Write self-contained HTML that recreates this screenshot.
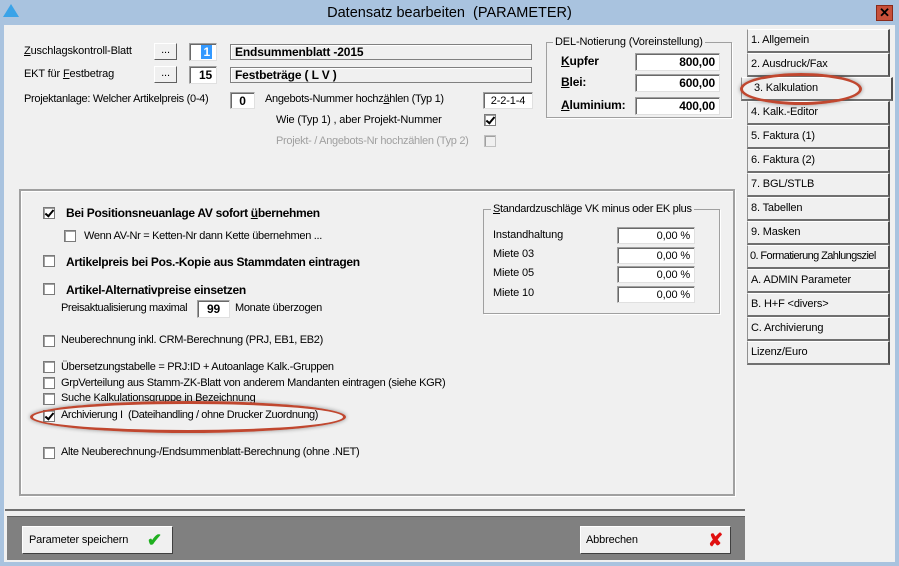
<!DOCTYPE html>
<html><head><meta charset="utf-8"><style>
*{box-sizing:border-box;margin:0;padding:0}
body{width:899px;height:566px;overflow:hidden;background:#a9c3df;font-family:"Liberation Sans",sans-serif;font-size:11px;color:#000;position:relative;letter-spacing:-0.15px}
.a{position:absolute;white-space:nowrap}
.win{position:absolute;left:4px;top:25px;width:891px;height:537px;background:#f0f0f0}
.inp{position:absolute;background:#fff;border:1px solid #a0a0a0;border-right-color:#e0e0e0;border-bottom-color:#e0e0e0;box-shadow:inset 1px 1px 0 #696969;text-align:right;padding-right:4px;font-weight:bold;font-size:12px;line-height:16px}
.ro{position:absolute;background:#f0f0f0;border:1px solid #808080;box-shadow:inset 1px 1px 0 #fff;font-weight:bold;font-size:12px;line-height:14px;padding-left:4px}
.btn{position:absolute;background:#f0f0f0;border:1px solid #fff;border-right-color:#606060;border-bottom-color:#606060;text-align:center}
.cb{position:absolute;width:12px;height:12px;background:#fff;border:1px solid #7a7a7a;box-shadow:inset 1px 1px 0 #a0a0a0}
.cb.c::after{content:"";position:absolute;left:3px;top:0px;width:3px;height:7px;border:solid #000;border-width:0 2px 2px 0;transform:rotate(40deg)}
.cb.d{background:#f0f0f0;border-color:#c0c0c0}
.tab{position:absolute;left:747px;width:143px;height:24px;background:#f0f0f0;border:1px solid #fff;border-right:2px solid #505050;border-bottom:2px solid #707070;border-left:1px solid #909090;padding-left:3px;line-height:20px;font-size:11px;overflow:hidden;white-space:nowrap}
.grp{position:absolute;border:1px solid #a0a0a0;box-shadow:1px 1px 0 #fff}
.b{font-weight:bold;font-size:12px}
u{text-decoration:underline}
.oval{position:absolute;border:3px solid #c0472f;border-radius:50%;box-shadow:0 0 4px rgba(0,0,0,.4)}
</style></head><body>
<div class="a" style="left:3px;top:4px;width:0;height:0;border-left:8px solid transparent;border-right:8px solid transparent;border-bottom:13px solid #3aa3e8"></div>
<div class="a" style="left:0;top:5px;width:899px;text-align:center;font-size:14.5px;color:#000;letter-spacing:0">Datensatz bearbeiten&nbsp; (PARAMETER)</div>
<div class="a" style="left:876px;top:5px;width:17px;height:16px;background:#c7503a;border:1px solid #8a2a1a;color:#000;font-weight:bold;font-size:13px;line-height:13px;text-align:center">✕</div>
<div class="win"></div>

<div class="a" style="left:24px;top:45px"><u>Z</u>uschlagskontroll-Blatt</div>
<div class="btn" style="left:154px;top:43px;width:23px;height:17px;line-height:12px">...</div>
<div class="inp" style="left:189px;top:43px;width:28px;height:18px"><span style="background:#3399ff;color:#fff;padding:0 2px">1</span></div>
<div class="ro" style="left:230px;top:44px;width:302px;height:16px">Endsummenblatt -2015</div>
<div class="a" style="left:24px;top:68px">EKT für <u>F</u>estbetrag</div>
<div class="btn" style="left:154px;top:66px;width:23px;height:17px;line-height:12px">...</div>
<div class="inp" style="left:189px;top:66px;width:28px;height:18px">15</div>
<div class="ro" style="left:230px;top:67px;width:302px;height:16px">Festbeträge ( L V )</div>
<div class="a" style="left:24px;top:93px;letter-spacing:-0.3px">Projektanlage: Welcher Artikelpreis (0-4)</div>
<div class="inp" style="left:230px;top:92px;width:25px;height:17px;text-align:center;padding:0">0</div>
<div class="a" style="left:265px;top:93px;letter-spacing:-0.3px">Angebots-Nummer hochz<u>ä</u>hlen (Typ 1)</div>
<div class="inp" style="left:483px;top:92px;width:50px;height:17px;font-weight:normal;font-size:11px;text-align:center;padding:0">2-2-1-4</div>
<div class="a" style="left:276px;top:114px">Wie (Typ 1) , aber Projekt-Nummer</div>
<div class="cb c" style="left:484px;top:114px"></div>
<div class="a" style="left:276px;top:135px;color:#a0a0a0;letter-spacing:-0.3px">Projekt- / Angebots-Nr hochzählen (Typ 2)</div>
<div class="cb d" style="left:484px;top:135px"></div>

<div class="grp" style="left:546px;top:42px;width:186px;height:76px"></div>
<div class="a" style="left:553px;top:36px;background:#f0f0f0;padding:0 2px">DEL-Notierung (Voreinstellung)</div>
<div class="a b" style="left:561px;top:54px"><u>K</u>upfer</div>
<div class="inp" style="left:635px;top:53px;width:85px;height:18px">800,00</div>
<div class="a b" style="left:561px;top:75px"><u>B</u>lei:</div>
<div class="inp" style="left:635px;top:74px;width:85px;height:18px">600,00</div>
<div class="a b" style="left:561px;top:98px"><u>A</u>luminium:</div>
<div class="inp" style="left:635px;top:97px;width:85px;height:18px">400,00</div>

<div class="grp" style="left:19px;top:189px;width:716px;height:307px;border:2px solid #a0a0a0;box-shadow:inset 1px 1px 0 #fff,1px 1px 0 #fff"></div>
<div class="cb c" style="left:43px;top:207px"></div>
<div class="a b" style="left:66px;top:206px;letter-spacing:-0.3px">Bei Positionsneuanlage AV sofort <u>ü</u>bernehmen</div>
<div class="cb" style="left:64px;top:230px"></div>
<div class="a" style="left:84px;top:230px;letter-spacing:-0.3px">Wenn AV-Nr = Ketten-Nr dann Kette übernehmen ...</div>
<div class="cb" style="left:43px;top:255px"></div>
<div class="a b" style="left:66px;top:255px;letter-spacing:-0.3px">Artikelpreis bei Pos.-Kopie aus Stammdaten eintragen</div>
<div class="cb" style="left:43px;top:283px"></div>
<div class="a b" style="left:66px;top:283px;letter-spacing:-0.3px">Artikel-Alternativpreise einsetzen</div>
<div class="a" style="left:61px;top:302px;letter-spacing:-0.4px">Preisaktualisierung maximal</div>
<div class="inp" style="left:197px;top:300px;width:33px;height:18px;text-align:center;padding:0">99</div>
<div class="a" style="left:235px;top:302px;letter-spacing:-0.3px">Monate überzogen</div>
<div class="cb" style="left:43px;top:335px"></div>
<div class="a" style="left:61px;top:334px;letter-spacing:-0.3px">Neuberechnung inkl. CRM-Berechnung (PRJ, EB1, EB2)</div>
<div class="cb" style="left:43px;top:361px"></div>
<div class="a" style="left:61px;top:361px;letter-spacing:-0.3px">Übersetzungstabelle = PRJ:ID + Autoanlage Kalk.-Gruppen</div>
<div class="cb" style="left:43px;top:377px"></div>
<div class="a" style="left:61px;top:377px;letter-spacing:-0.3px">GrpVerteilung aus Stamm-ZK-Blatt von anderem Mandanten eintragen (siehe KGR)</div>
<div class="cb" style="left:43px;top:393px"></div>
<div class="a" style="left:61px;top:392px;letter-spacing:-0.3px">Suche Kalkulationsgruppe in Bezeichnung</div>
<div class="cb c" style="left:43px;top:410px"></div>
<div class="a" style="left:61px;top:409px;letter-spacing:-0.4px">Archivierung I&nbsp; (Dateihandling / ohne Drucker Zuordnung)</div>
<div class="oval" style="left:30px;top:401px;width:316px;height:32px"></div>
<div class="cb" style="left:43px;top:447px"></div>
<div class="a" style="left:61px;top:446px;letter-spacing:-0.3px">Alte Neuberechnung-/Endsummenblatt-Berechnung (ohne .NET)</div>

<div class="grp" style="left:483px;top:209px;width:237px;height:105px"></div>
<div class="a" style="left:491px;top:203px;background:#f0f0f0;padding:0 2px;letter-spacing:-0.3px"><u>S</u>tandardzuschläge VK minus oder EK plus</div>
<div class="a" style="left:493px;top:229px">Instandhaltung</div>
<div class="a" style="left:493px;top:248px">Miete 03</div>
<div class="a" style="left:493px;top:267px">Miete 05</div>
<div class="a" style="left:493px;top:287px">Miete 10</div>
<div class="inp" style="left:617px;top:227px;width:78px;height:17px;font-weight:normal;font-size:11px">0,00 %</div>
<div class="inp" style="left:617px;top:247px;width:78px;height:17px;font-weight:normal;font-size:11px">0,00 %</div>
<div class="inp" style="left:617px;top:266px;width:78px;height:17px;font-weight:normal;font-size:11px">0,00 %</div>
<div class="inp" style="left:617px;top:286px;width:78px;height:17px;font-weight:normal;font-size:11px">0,00 %</div>

<div class="a" style="left:5px;top:509px;width:740px;height:2px;background:#707070"></div>
<div class="a" style="left:7px;top:516px;width:738px;height:44px;background:#808080;border-top:1px solid #606060"></div>
<div class="btn" style="left:22px;top:526px;width:151px;height:28px;text-align:left;padding-left:6px;line-height:26px;border-color:#fff #404040 #404040 #fff">Parameter speichern<span style="position:absolute;left:124px;top:0;color:#20b020;font-size:18px;font-weight:bold">✔</span></div>
<div class="btn" style="left:580px;top:526px;width:151px;height:28px;text-align:left;padding-left:5px;line-height:26px;border-color:#fff #404040 #404040 #fff">Abbrechen<span style="position:absolute;left:127px;top:0;color:#e01010;font-size:18px;font-weight:bold">✘</span></div>

<div class="tab" style="top:29px">1. Allgemein</div>
<div class="tab" style="top:53px">2. Ausdruck/Fax</div>
<div class="tab" style="top:101px">4. Kalk.-Editor</div>
<div class="tab" style="top:125px">5. Faktura (1)</div>
<div class="tab" style="top:149px">6. Faktura (2)</div>
<div class="tab" style="top:173px">7. BGL/STLB</div>
<div class="tab" style="top:197px">8. Tabellen</div>
<div class="tab" style="top:221px">9. Masken</div>
<div class="tab" style="top:245px;letter-spacing:-0.6px;padding-left:2px">0. Formatierung Zahlungsziel</div>
<div class="tab" style="top:269px">A. ADMIN Parameter</div>
<div class="tab" style="top:293px">B. H+F &lt;divers&gt;</div>
<div class="tab" style="top:317px">C. Archivierung</div>
<div class="tab" style="top:341px">Lizenz/Euro</div>
<div class="tab" style="top:77px;left:741px;width:152px;padding-left:12px;z-index:2">3. Kalkulation</div>
<div class="oval" style="left:740px;top:73px;width:122px;height:32px;z-index:3"></div>
</body></html>
